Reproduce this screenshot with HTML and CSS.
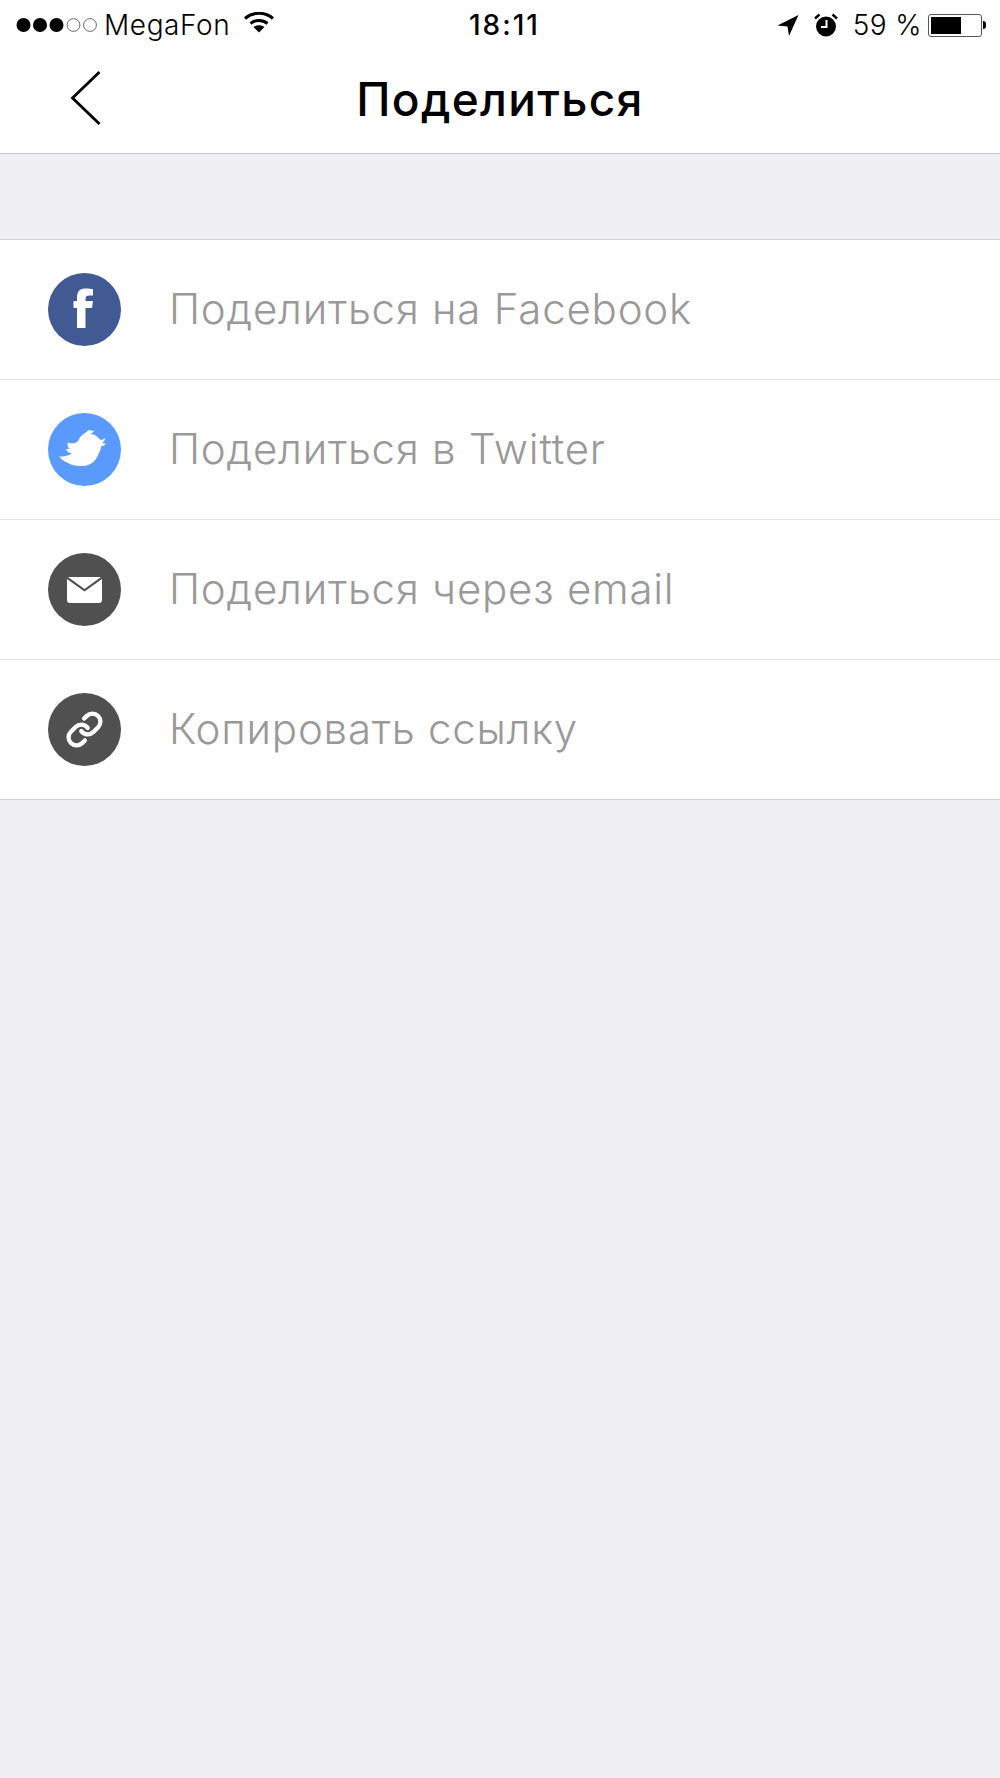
FILE: index.html
```html
<!DOCTYPE html>
<html lang="ru">
<head>
    <meta charset="UTF-8">
    <title>Поделиться</title>
    <link rel="stylesheet" href="styles.css">
</head>
<body>
    <div class="status">
        <div class="status-left">
            <svg class="signal" width="84" height="16" viewBox="0 0 84 16">
                <circle cx="7.500" cy="8" r="7" fill="#000"/>
                <circle cx="24" cy="8" r="7" fill="#000"/>
                <circle cx="40.500" cy="8" r="7" fill="#000"/>
                <circle cx="57.500" cy="8" r="6.400" fill="none" stroke="#444" stroke-width="0.8"/>
                <circle cx="74" cy="8" r="6.400" fill="none" stroke="#444" stroke-width="0.8"/>
            </svg>
            <span class="carrier">MegaFon</span>
            <svg class="wifi" width="30" height="21" viewBox="0 0 30 21">
                <path d="M1 6.500C9 -0.500 21 -0.500 29 6.500" fill="none" stroke="#000" stroke-width="3"/>
                <path d="M6.500 11.500C11.500 7.500 18.500 7.500 23.500 11.500" fill="none" stroke="#000" stroke-width="3"/>
                <path d="M9.500 15C13 12.600 17 12.600 20.500 15L15 20.500Z" fill="#000"/>
            </svg>
        </div>
        <div class="status-time">18:11</div>
        <div class="status-right">
            <svg class="arrow" width="22" height="22" viewBox="0 0 22 22">
                <path d="M0.500 11.500L21.500 1L12 22L10.500 12.500Z" fill="#000"/>
            </svg>
            <svg class="alarm" width="24" height="24" viewBox="0 0 24 24">
                <circle cx="12" cy="13.500" r="10" fill="#000"/>
                <path d="M1 5.500L5.500 1.500M23 5.500L18.500 1.500" stroke="#000" stroke-width="2.400"/>
                <path d="M12.500 7V14H7" fill="none" stroke="#fff" stroke-width="2"/>
            </svg>
            <span class="battery-text">59 %</span>
            <div class="battery"><div class="battery-level"></div></div>
            <div class="battery-cap"></div>
        </div>
    </div>

    <div class="navbar">
        <svg class="back" width="32" height="56" viewBox="0 0 32 56">
            <path d="M29.500 2L2.500 28L29.500 54" fill="none" stroke="#000" stroke-width="2.800"/>
        </svg>
        <h1>Поделиться</h1>
    </div>

    <div class="list">
        <div class="row">
            <svg class="icon" width="73" height="73" viewBox="0 0 73 73">
                <circle cx="36.500" cy="36.500" r="36.500" fill="#415a94"/>
                <path d="M29 55V35H25.500V28H29V24C29 18 32 15.500 38 15.500C41 15.500 43 15.800 45 16.200V22.500H41.500C38.500 22.500 37.500 23.500 37.500 26V28H45L44 35H37.500V55Z" fill="#fff"/>
            </svg>
            <span>Поделиться на Facebook</span>
        </div>
        <div class="row">
            <svg class="icon" width="73" height="73" viewBox="0 0 73 73">
                <circle cx="36.500" cy="36.500" r="36.500" fill="#5a9afc"/>
                <path d="M11 43.500C15 43.800 20 43 24 40.500C21 40 18.500 38.500 18 36C19 36.300 20.500 36 21.500 35.500C19.500 34 19 31.500 20 29.500C22.500 30.500 25 30.500 27 30C28 29.500 29.500 28.500 30 28C31.500 24.500 34 21.500 37 20C38.500 19 40 17.500 41 17C43 17.800 45 17.800 46.500 17.500C45.500 19 44 20.500 42 21C45 21 47.500 22 49 23.500C50.500 25 51.500 26 53 27C54.500 26.800 56 26 57.500 25C57 27 55.500 29 54 30C55.500 30.500 57 30.500 58 30.500C57 32 55 33 53 33.500C53 36 52 38 51 40C49.500 44 47 48 44 50C40.500 52.500 36.500 53 33 53C27 53 23 52 20 50C16.500 48.500 13 46 11 43.500Z" fill="#fff"/>
            </svg>
            <span>Поделиться в Twitter</span>
        </div>
        <div class="row">
            <svg class="icon" width="73" height="73" viewBox="0 0 73 73">
                <circle cx="36.500" cy="36.500" r="36.500" fill="#505050"/>
                <path d="M19 26L36.500 38.500L54 26V47C54 49 53 50 51 50H22C20 50 19 49 19 47Z" fill="#fff"/>
                <path d="M20 24H53L36.500 36Z" fill="#fff"/>
            </svg>
            <span>Поделиться через email</span>
        </div>
        <div class="row">
            <svg class="icon" width="73" height="73" viewBox="0 0 73 73">
                <circle cx="36.500" cy="36.500" r="36.500" fill="#505050"/>
                <g fill="none" stroke="#fff" stroke-width="2.700" stroke-linecap="round" stroke-linejoin="round" transform="translate(17.300 17.300) scale(1.600)">
                    <path d="M10 13a5 5 0 0 0 7.540.540l3-3a5 5 0 0 0-7.070-7.070l-1.720 1.710"/>
                    <path d="M14 11a5 5 0 0 0-7.540-.540l-3 3a5 5 0 0 0 7.070 7.070l1.710-1.710"/>
                </g>
            </svg>
            <span>Копировать ссылку</span>
        </div>
    </div>
</body>
</html>
```

FILE: styles.css
```css
html, body {
    margin: 0;
    padding: 0;
}
body {
    width: 1000px;
    height: 1778px;
    background-color: #efeff4;
    font-family: Inter, "Liberation Sans", sans-serif;
    overflow: hidden;
}
.status {
    height: 50px;
    background-color: #fff;
    display: flex;
    align-items: center;
    justify-content: space-between;
    position: relative;
    padding: 0 14px 0 16px;
}
.status-left, .status-right {
    display: flex;
    align-items: center;
}
.carrier {
    font-size: 28px;
    font-weight: 300;
    letter-spacing: 0.6px;
    margin-left: 4px;
}
.wifi {
    margin-left: 14px;
    margin-top: -6px;
}
.status-time {
    position: absolute;
    left: 469px;
    font-size: 28px;
    font-weight: 500;
    letter-spacing: 2px;
}
.status-right .arrow, .status-right .alarm {
    margin-right: 15px;
}
.battery-text {
    font-size: 28px;
    font-weight: 300;
    letter-spacing: 0.4px;
    margin-right: 6px;
}
.battery {
    width: 48px;
    height: 17px;
    border: 1px solid #555;
    border-radius: 3px;
    padding: 2px;
}
.battery-level {
    width: 30px;
    height: 17px;
    background-color: #000;
}
.battery-cap {
    width: 3px;
    height: 8px;
    margin-left: 1px;
    background-color: #000;
    border-radius: 0 3px 3px 0;
}
.navbar {
    height: 103px;
    background-color: #fff;
    border-bottom: 1px solid #c8c7cc;
    display: flex;
    align-items: center;
    justify-content: center;
    position: relative;
}
.navbar h1 {
    margin: 0 0 5px;
    font-size: 46px;
    font-weight: 500;
    letter-spacing: 1.300px;
    color: #000;
}
.back {
    position: absolute;
    left: 70px;
    top: 20px;
}
.list {
    margin-top: 85px;
    background-color: #fff;
    border-top: 1px solid #d4d4d8;
    border-bottom: 1px solid #d4d4d8;
}
.row {
    height: 139px;
    display: flex;
    align-items: center;
    padding-left: 48px;
    font-size: 42px;
    font-weight: 300;
    letter-spacing: 0.780px;
    color: #999;
}
.row span {
    margin-bottom: 2px;
}
.row + .row {
    border-top: 1px solid #e2e2e2;
}
.icon {
    margin-right: 48px;
}
```
